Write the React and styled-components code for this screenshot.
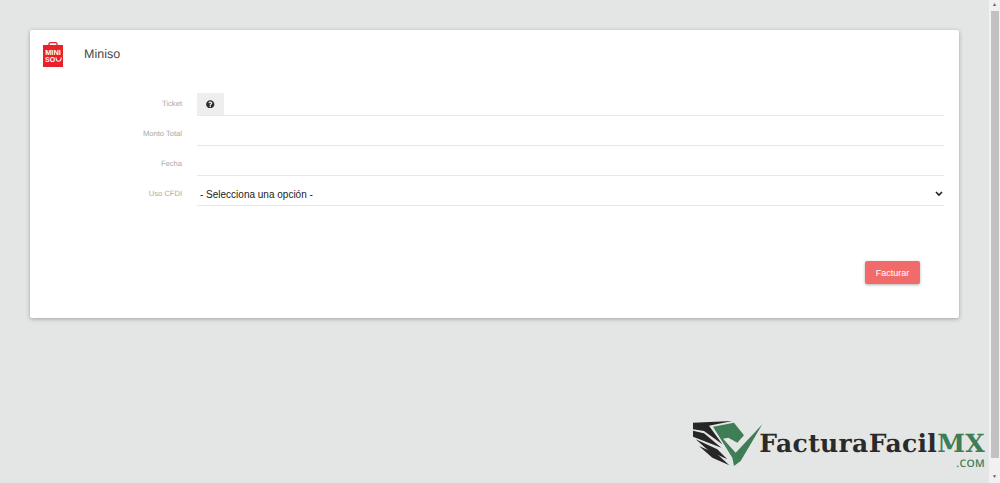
import React from "react";
import styled, { createGlobalStyle } from "styled-components";
import { FaQuestionCircle } from "react-icons/fa";

const GlobalStyle = createGlobalStyle`
  html, body {
    margin: 0;
    padding: 0;
    height: 100%;
    overflow: hidden;
    background: #e4e6e5;
    font-family: "Liberation Sans", Arial, sans-serif;
    text-rendering: geometricPrecision;
  }
`;

const Screen = styled.div`
  display: flex;
  width: 1000px;
  height: 483px;
`;

const Page = styled.main`
  flex: 1;
  display: flex;
  flex-direction: column;
  padding: 30px 4px 14px 30px;
  box-sizing: border-box;
`;

const Card = styled.section`
  width: 929px;
  height: 288px;
  box-sizing: border-box;
  background: #fff;
  border-radius: 2px;
  box-shadow: 0 1px 4px rgba(0, 0, 0, 0.3);
  padding: 12px 15px 0 13px;
`;

const CardHeader = styled.header`
  display: flex;
  align-items: center;
  gap: 21px;
  height: 25px;
`;

const Title = styled.h1`
  margin: 0;
  padding-bottom: 2px;
  font-size: 12.5px;
  font-weight: 400;
  color: #4a4a4a;
`;

const Form = styled.form`
  display: flex;
  flex-direction: column;
  margin-top: 19px;
`;

const Row = styled.div`
  display: grid;
  grid-template-columns: 140px 1fr;
  column-gap: 14px;
  height: 30px;
`;

const Label = styled.label`
  align-self: center;
  text-align: right;
  font-size: 7.6px;
  color: #a8a8a8;
  padding: 5px 1px 0 0;
`;

const Field = styled.div`
  display: flex;
  align-items: stretch;
  border-bottom: 1px solid #e8e8e8;
  height: 30px;
  box-sizing: border-box;
`;

const Addon = styled.span`
  width: 27px;
  margin-top: 7px;
  display: flex;
  align-items: center;
  justify-content: center;
  background: #eeeeee;
  color: #2b2b2b;
  font-size: 8.5px;
`;

const Input = styled.input`
  flex: 1;
  min-width: 0;
  border: 0;
  outline: 0;
  background: transparent;
`;

const Select = styled.select`
  flex: 1;
  min-width: 0;
  border: 0;
  outline: 0;
  appearance: none;
  background: transparent
    url("data:image/svg+xml,%3Csvg xmlns='http://www.w3.org/2000/svg' width='8' height='6' viewBox='0 0 8 6'%3E%3Cpath d='M1 1l3 3 3-3' fill='none' stroke='%23222' stroke-width='1.6'/%3E%3C/svg%3E")
    no-repeat right 1px top 15px;
  font-family: "Liberation Sans", Arial, sans-serif;
  font-size: 10px;
  color: #222;
  padding: 7px 0 0 3px;
`;

const Actions = styled.div`
  display: flex;
  justify-content: flex-end;
  margin-top: 55px;
  padding-right: 24px;
`;

const SubmitButton = styled.button`
  width: 55px;
  height: 23px;
  border: 0;
  border-radius: 2px;
  background: #f26b6b;
  color: #fff;
  font-family: inherit;
  font-size: 9px;
  box-shadow: 0 1px 3px rgba(0, 0, 0, 0.3);
`;

const Brand = styled.footer`
  margin-top: auto;
  display: flex;
  align-items: flex-start;
  justify-content: flex-end;
`;

const BrandWords = styled.div`
  display: flex;
  flex-direction: column;
  align-items: flex-end;
  margin-left: -5px;
  margin-top: 11px;
`;

const BrandName = styled.div`
  font-family: "DejaVu Serif", serif;
  font-weight: 700;
  font-size: 25px;
  letter-spacing: 0.35px;
  line-height: 26px;
  color: #2a2a2a;
  white-space: nowrap;
`;

const BrandAccent = styled.span`
  color: #3f7d57;
`;

const BrandDomain = styled.div`
  font-family: "Open Sans", sans-serif;
  font-weight: 600;
  font-size: 10.5px;
  line-height: 10px;
  margin-top: 2px;
  color: #3f7d57;
  letter-spacing: 0.3px;
`;

const Scrollbar = styled.aside`
  width: 11px;
  background: #f1f1f1;
  display: flex;
  flex-direction: column;
  align-items: stretch;
`;

const ScrollArrow = styled.div`
  height: 11px;
  display: flex;
  align-items: center;
  justify-content: center;
  color: #606060;
  font-size: 5px;
  line-height: 1;
`;

const ScrollTrack = styled.div`
  flex: 1;
`;

const ScrollThumb = styled.div`
  height: 447px;
  margin: 0 1px 0 2px;
  background: #c1c1c1;
`;

function MinisoLogo() {
  return (
    <svg width="20" height="25" viewBox="0 0 20 25" aria-label="Miniso">
      <path d="M6 4V1.8C6 1 6.8.7 7.5.7h5c.8 0 1.5.4 1.5 1.2V4" fill="none" stroke="#e8212b" strokeWidth="1.3" />
      <rect x="0" y="3" width="20" height="22" fill="#e8212b" />
      <text x="10" y="13.4" textAnchor="middle" fontSize="7.4" fontWeight="700" fill="#fff" fontFamily="Liberation Sans">MINI</text>
      <text x="2" y="20" fontSize="7" fontWeight="700" fill="#fff" fontFamily="Liberation Sans">SO</text>
      <path d="M13 15.5c.2 5 5 5 5.2 0" fill="none" stroke="#fff" strokeWidth="1.1" />
    </svg>
  );
}

function BrandMark() {
  return (
    <svg width="72" height="46" viewBox="0 0 216 138" aria-hidden="true">
      <path d="M3 8 121 3 51 17 91 73 36 33 3 28Z" fill="#262626" />
      <path d="M3 32 36 40 88 83 3 50Z" fill="#262626" />
      <path d="M11 58 76 88 106 118 51 93Z" fill="#262626" />
      <path d="M21 78 76 103 112 136 61 113Z" fill="#262626" />
      <path d="M63 20 126 8 156 46 136 68 109 53 93 56 131 98 211 13 146 123 126 138 121 113Z" fill="#3f7d57" />
    </svg>
  );
}

export default function App() {
  return (
    <Screen>
      <GlobalStyle />
      <Page>
        <Card>
          <CardHeader>
            <MinisoLogo />
            <Title>Miniso</Title>
          </CardHeader>
          <Form>
            <Row>
              <Label htmlFor="ticket">Ticket</Label>
              <Field>
                <Addon><FaQuestionCircle /></Addon>
                <Input id="ticket" type="text" />
              </Field>
            </Row>
            <Row>
              <Label htmlFor="monto">Monto Total</Label>
              <Field><Input id="monto" type="text" /></Field>
            </Row>
            <Row>
              <Label htmlFor="fecha">Fecha</Label>
              <Field><Input id="fecha" type="text" /></Field>
            </Row>
            <Row>
              <Label htmlFor="uso">Uso CFDI</Label>
              <Field>
                <Select id="uso" defaultValue="">
                  <option value="">- Selecciona una opción -</option>
                </Select>
              </Field>
            </Row>
            <Actions>
              <SubmitButton type="button">Facturar</SubmitButton>
            </Actions>
          </Form>
        </Card>
        <Brand>
          <BrandMark />
          <BrandWords>
            <BrandName>FacturaFacil<BrandAccent>MX</BrandAccent></BrandName>
            <BrandDomain>.COM</BrandDomain>
          </BrandWords>
        </Brand>
      </Page>
      <Scrollbar>
        <ScrollArrow>▲</ScrollArrow>
        <ScrollThumb />
        <ScrollTrack />
        <ScrollArrow>▼</ScrollArrow>
      </Scrollbar>
    </Screen>
  );
}
